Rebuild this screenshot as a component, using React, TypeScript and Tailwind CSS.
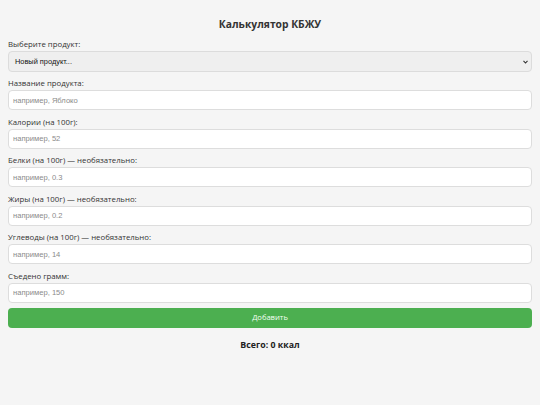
import React from "react";

const fields = [
  { label: "Название продукта:", ph: "например, Яблоко" },
  { label: "Калории (на 100г):", ph: "например, 52" },
  { label: "Белки (на 100г) — необязательно:", ph: "например, 0.3" },
  { label: "Жиры (на 100г) — необязательно:", ph: "например, 0.2" },
  { label: "Углеводы (на 100г) — необязательно:", ph: "например, 14" },
  { label: "Съедено грамм:", ph: "например, 150" },
];

export default function App() {
  return (
    <div className="min-h-[405px] w-full bg-[#f5f5f5] px-[8px] pt-[16px] text-[#222]" style={{ fontFamily: '"Open Sans", sans-serif' }}>
      <h1 className="text-center text-[10.3px] font-bold leading-[16px] text-[#333] mb-[6px]">Калькулятор КБЖУ</h1>
      <label className="block text-[7.8px] leading-[12px] text-[#333] mb-[1px]">Выберите продукт:</label>
      <div className="relative mb-[5px] flex h-[21px] items-center rounded-[4px] border border-[#dcdcdc] bg-[#efefef] px-[6px]">
        <span className="text-[7.4px] text-[#111]" style={{ fontFamily: '"Liberation Sans", Arial, sans-serif' }}>Новый продукт...</span>
        <svg className="absolute right-[3px] top-[8px]" width="5" height="4" viewBox="0 0 5 4">
          <path d="M0.5 0.8 L2.5 3 L4.5 0.8" stroke="#333" strokeWidth="1.1" fill="none" />
        </svg>
      </div>
      {fields.map((f) => (
        <div key={f.label} className="mb-[5.5px]">
          <label className="block text-[7.8px] leading-[12px] text-[#333] mb-[1px]">{f.label}</label>
          <input
            className="block h-[20px] w-full rounded-[4px] border border-[#dddddd] bg-white px-[4px] text-[7.6px] outline-none placeholder:text-[#8a8a8a]"
            style={{ fontFamily: '"Liberation Sans", Arial, sans-serif' }}
            placeholder={f.ph}
          />
        </div>
      ))}
      <button className="mt-[5px] block h-[20px] w-full rounded-[4px] bg-[#4caf50] text-[7.6px] font-normal text-[#f4fff4]">
        Добавить
      </button>
      <div className="mt-[11px] text-center text-[8.8px] font-bold leading-[12px] text-[#222]">Всего: 0 ккал</div>
    </div>
  );
}
